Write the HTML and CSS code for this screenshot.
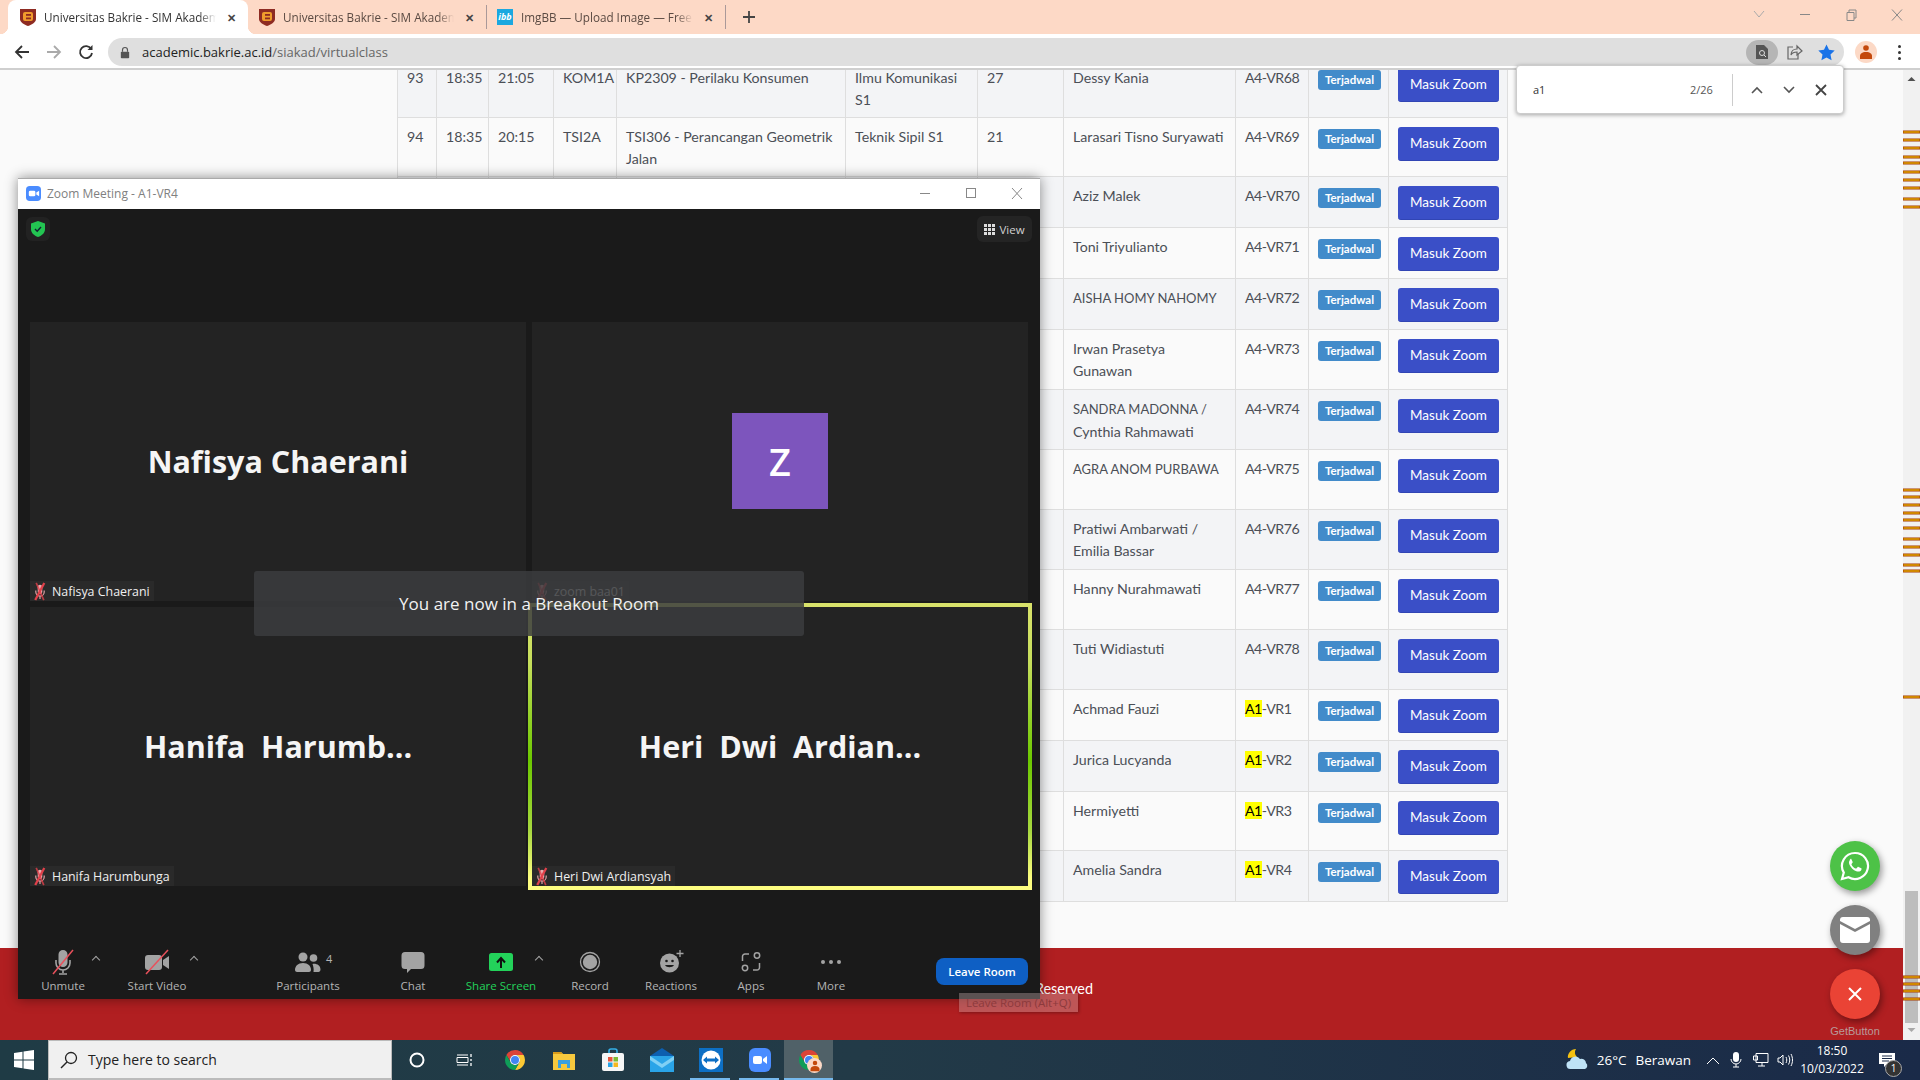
FILE: index.html
```html
<!DOCTYPE html>
<html lang="id">
<head>
  <meta charset="UTF-8">
  <title>Universitas Bakrie - SIM Akademik</title>
  <link rel="stylesheet" href="styles.css">
</head>
<body>
  <svg class="defs" width="0" height="0">
    <symbol id="muted" viewBox="0 0 14 20">
      <path d="M7 3a2.400 2.400 0 0 1 2.400 2.400v5a2.400 2.400 0 0 1-4.800 0v-5A2.400 2.400 0 0 1 7 3z" fill="#eaa9ad"/>
      <path d="M2.600 9v1.400a4.400 4.400 0 0 0 8.800 0V9M7 15v3" fill="none" stroke="#eaa9ad" stroke-width="1.200"/>
      <path d="M11.500 1 2 19" stroke="#e0404a" stroke-width="2.400"/>
      <path d="M3 1l8 18" stroke="#e0404a" stroke-width="1.800" opacity=".8"/>
    </symbol>
    <symbol id="chrome" viewBox="0 0 24 24">
      <path d="M12 2a10 10 0 0 1 8.660 5H12a5 5 0 0 0-4.900 6L3.340 7A10 10 0 0 1 12 2z" fill="#db4437"/>
      <path d="M20.660 7A10 10 0 0 1 12 22l4.330-7.500A5 5 0 0 0 12 7z" fill="#fcc934"/>
      <path d="M3.340 7 7.670 14.500A5 5 0 0 0 16.330 14.500L12 22A10 10 0 0 1 3.340 7z" fill="#0f9d58"/>
      <circle cx="12" cy="12" r="5" fill="#fff"/>
      <circle cx="12" cy="12" r="4" fill="#4285f4"/>
    </symbol>
    <symbol id="shield" viewBox="0 0 16 18">
      <path d="M0 1h16v10c0 3.500-4 5.500-8 7-4-1.500-8-3.500-8-7z" fill="#8e2b22"/>
      <rect x="3" y="4" width="10" height="9" rx="2" fill="#f09c2c"/>
      <rect x="6" y="6" width="5" height="1.800" fill="#8e2b22"/>
      <rect x="6" y="9.500" width="5" height="1.800" fill="#8e2b22"/>
    </symbol>
  </svg>

  <!-- browser chrome -->
  <div class="tab-strip">
    <div class="tab tab-active">
      <svg class="favicon" viewBox="0 0 16 18"><use href="#shield"/></svg>
      <span class="tab-title">Universitas Bakrie - SIM Akademik</span>
      <span class="tab-close">✕</span>
    </div>
    <div class="tab">
      <svg class="favicon" viewBox="0 0 16 18"><use href="#shield"/></svg>
      <span class="tab-title">Universitas Bakrie - SIM Akademik</span>
      <span class="tab-close">✕</span>
    </div>
    <div class="tab tab-divided">
      <span class="favicon favicon-ibb">ibb</span>
      <span class="tab-title">ImgBB — Upload Image — Free Image</span>
      <span class="tab-close">✕</span>
    </div>
    <div class="new-tab">
      <svg width="14" height="14" viewBox="0 0 14 14"><path d="M7 1v12M1 7h12" stroke="#444" stroke-width="1.800"/></svg>
    </div>
    <div class="win-controls">
      <svg viewBox="0 0 46 34"><path d="M18 11l5 6 5-6" fill="none" stroke="#aaa"/></svg>
      <svg viewBox="0 0 46 34"><path d="M18 14.500h10" stroke="#888"/></svg>
      <svg viewBox="0 0 46 34"><path d="M19 12.500h7v8h-7zM21 12.500v-2.500h7v8h-2" fill="none" stroke="#888"/></svg>
      <svg viewBox="0 0 46 34"><path d="M18 9.500l10 11M28 9.500l-10 11" stroke="#888"/></svg>
    </div>
  </div>

  <div class="address-row">
    <div class="nav-btn"><svg viewBox="0 0 16 16"><path d="M15 8H2M8 2 2 8l6 6" fill="none" stroke="#333" stroke-width="1.800"/></svg></div>
    <div class="nav-btn"><svg viewBox="0 0 16 16"><path d="M1 8h13M8 2l6 6-6 6" fill="none" stroke="#aaa" stroke-width="1.800"/></svg></div>
    <div class="nav-btn"><svg viewBox="0 0 16 16"><path d="M13.200 5A6 6 0 1 0 14 9" fill="none" stroke="#333" stroke-width="1.800"/><path d="M14.500 1v5h-5z" fill="#333"/></svg></div>
    <div class="url-pill">
      <svg class="lock" viewBox="0 0 12 14"><path d="M3 6V4a3 3 0 0 1 6 0v2" fill="none" stroke="#555" stroke-width="1.400"/><rect x="1" y="6" width="10" height="8" rx="1" fill="#555"/></svg>
      <span class="url"><b>academic.bakrie.ac.id</b>/siakad/virtualclass</span>
      <div class="pill-actions">
        <span class="pill-icon pill-icon-on"><svg width="12" height="16" viewBox="0 0 12 16"><path d="M0 1h8l4 4v10H0z" fill="#555"/><circle cx="6" cy="9" r="2.500" fill="none" stroke="#ddd"/><path d="M8 11l2 2" stroke="#ddd"/></svg></span>
        <span class="pill-icon"><svg width="18" height="18" viewBox="0 0 18 18"><path d="M8 4H3v12h10v-5" fill="none" stroke="#666" stroke-width="1.200"/><path d="M6 12c0-4 3-6 6-6V3l5 5-5 4V9c-3 0-5 1-6 3z" fill="none" stroke="#666" stroke-width="1.200"/></svg></span>
        <span class="pill-icon"><svg width="17" height="17" viewBox="0 0 17 17"><path d="M8.500 .5l2.500 5.300 5.700.7-4.200 4 1.100 5.800-5.100-2.800-5.100 2.800 1.100-5.800-4.200-4 5.700-.7z" fill="#1a73e8"/></svg></span>
      </div>
    </div>
    <div class="profile-actions">
      <span class="avatar"><svg width="12" height="16" viewBox="0 0 12 16"><circle cx="6" cy="4" r="2.800" fill="#c4490c"/><path d="M0 15v-3c0-2 2-4 6-4s6 2 6 4v3z" fill="#c4490c"/></svg></span>
      <span class="dots"><i></i><i></i><i></i></span>
    </div>
  </div>

  <!-- the web page, scrolled -->
  <div class="viewport">
    <div class="page">
      <div class="content">
        <table class="class-table">
          <colgroup>
            <col class="c-no"><col class="c-start"><col class="c-end"><col class="c-class"><col class="c-subject"><col class="c-prodi"><col class="c-count"><col class="c-name"><col class="c-room"><col class="c-status"><col class="c-action">
          </colgroup>
          <tr class="row-59"><td>93</td><td>18:35</td><td>21:05</td><td>KOM1A</td><td>KP2309 - Perilaku Konsumen</td><td>Ilmu Komunikasi S1</td><td>27</td><td class="nowrap">Dessy Kania</td><td class="room">A4-VR68</td><td><span class="badge">Terjadwal</span></td><td><a class="btn-zoom">Masuk Zoom</a></td></tr>
          <tr class="row-59"><td>94</td><td>18:35</td><td>20:15</td><td>TSI2A</td><td>TSI306 - Perancangan Geometrik Jalan</td><td>Teknik Sipil S1</td><td>21</td><td class="nowrap">Larasari Tisno Suryawati</td><td class="room">A4-VR69</td><td><span class="badge">Terjadwal</span></td><td><a class="btn-zoom">Masuk Zoom</a></td></tr>
          <tr class="row-51"><td></td><td></td><td></td><td></td><td></td><td></td><td></td><td class="nowrap">Aziz Malek</td><td class="room">A4-VR70</td><td><span class="badge">Terjadwal</span></td><td><a class="btn-zoom">Masuk Zoom</a></td></tr>
          <tr class="row-51"><td></td><td></td><td></td><td></td><td></td><td></td><td></td><td class="nowrap">Toni Triyulianto</td><td class="room">A4-VR71</td><td><span class="badge">Terjadwal</span></td><td><a class="btn-zoom">Masuk Zoom</a></td></tr>
          <tr class="row-51"><td></td><td></td><td></td><td></td><td></td><td></td><td></td><td class="nowrap"><span class="caps">AISHA HOMY NAHOMY</span></td><td class="room">A4-VR72</td><td><span class="badge">Terjadwal</span></td><td><a class="btn-zoom">Masuk Zoom</a></td></tr>
          <tr class="row-60"><td></td><td></td><td></td><td></td><td></td><td></td><td></td><td class="nowrap">Irwan Prasetya<br>Gunawan</td><td class="room">A4-VR73</td><td><span class="badge">Terjadwal</span></td><td><a class="btn-zoom">Masuk Zoom</a></td></tr>
          <tr class="row-60"><td></td><td></td><td></td><td></td><td></td><td></td><td></td><td class="nowrap"><span class="caps">SANDRA MADONNA /</span><br>Cynthia Rahmawati</td><td class="room">A4-VR74</td><td><span class="badge">Terjadwal</span></td><td><a class="btn-zoom">Masuk Zoom</a></td></tr>
          <tr class="row-60"><td></td><td></td><td></td><td></td><td></td><td></td><td></td><td class="nowrap"><span class="caps">AGRA ANOM PURBAWA</span></td><td class="room">A4-VR75</td><td><span class="badge">Terjadwal</span></td><td><a class="btn-zoom">Masuk Zoom</a></td></tr>
          <tr class="row-60"><td></td><td></td><td></td><td></td><td></td><td></td><td></td><td class="nowrap">Pratiwi Ambarwati /<br>Emilia Bassar</td><td class="room">A4-VR76</td><td><span class="badge">Terjadwal</span></td><td><a class="btn-zoom">Masuk Zoom</a></td></tr>
          <tr class="row-60"><td></td><td></td><td></td><td></td><td></td><td></td><td></td><td class="nowrap">Hanny Nurahmawati</td><td class="room">A4-VR77</td><td><span class="badge">Terjadwal</span></td><td><a class="btn-zoom">Masuk Zoom</a></td></tr>
          <tr class="row-60"><td></td><td></td><td></td><td></td><td></td><td></td><td></td><td class="nowrap">Tuti Widiastuti</td><td class="room">A4-VR78</td><td><span class="badge">Terjadwal</span></td><td><a class="btn-zoom">Masuk Zoom</a></td></tr>
          <tr class="row-51"><td></td><td></td><td></td><td></td><td></td><td></td><td></td><td class="nowrap">Achmad Fauzi</td><td class="room"><mark>A1</mark>-VR1</td><td><span class="badge">Terjadwal</span></td><td><a class="btn-zoom">Masuk Zoom</a></td></tr>
          <tr class="row-51"><td></td><td></td><td></td><td></td><td></td><td></td><td></td><td class="nowrap">Jurica Lucyanda</td><td class="room"><mark>A1</mark>-VR2</td><td><span class="badge">Terjadwal</span></td><td><a class="btn-zoom">Masuk Zoom</a></td></tr>
          <tr class="row-59"><td></td><td></td><td></td><td></td><td></td><td></td><td></td><td class="nowrap">Hermiyetti</td><td class="room"><mark>A1</mark>-VR3</td><td><span class="badge">Terjadwal</span></td><td><a class="btn-zoom">Masuk Zoom</a></td></tr>
          <tr class="row-51"><td></td><td></td><td></td><td></td><td></td><td></td><td></td><td class="nowrap">Amelia Sandra</td><td class="room"><mark>A1</mark>-VR4</td><td><span class="badge">Terjadwal</span></td><td><a class="btn-zoom">Masuk Zoom</a></td></tr>
        </table>
      </div>
      <div class="site-footer">All Rights Reserved</div>
    </div>

    <div class="scrollbar">
      <svg class="scroll-ticks" width="17" height="970" viewBox="0 0 17 970">
        <g fill="#ffd400" stroke="#a33a00" stroke-width="1">
          <rect x="0" y="61" width="17" height="2"/><rect x="0" y="69" width="17" height="2"/><rect x="0" y="77" width="17" height="2"/><rect x="0" y="86" width="17" height="2"/><rect x="0" y="92" width="17" height="2"/><rect x="0" y="101" width="17" height="2"/><rect x="0" y="109" width="17" height="2"/><rect x="0" y="117" width="17" height="2"/><rect x="0" y="128" width="17" height="2"/><rect x="0" y="136" width="17" height="2"/>
          <rect x="0" y="419" width="17" height="2"/><rect x="0" y="426" width="17" height="2"/><rect x="0" y="434" width="17" height="2"/><rect x="0" y="442" width="17" height="2"/><rect x="0" y="449" width="17" height="2"/><rect x="0" y="457" width="17" height="2"/><rect x="0" y="468" width="17" height="2"/><rect x="0" y="476" width="17" height="2"/><rect x="0" y="484" width="17" height="2"/><rect x="0" y="494" width="17" height="2"/><rect x="0" y="500" width="17" height="2"/>
          <rect x="0" y="626" width="17" height="2"/>
        </g>
        <path d="M8.500 7l4 4h-8z" fill="#505050"/>
        <rect x="2" y="821" width="13" height="132" fill="#bdbdbd"/>
        <g fill="#ffd400" stroke="#a33a00" stroke-width="1">
          <rect x="0" y="906" width="17" height="2"/><rect x="0" y="913" width="17" height="2"/><rect x="0" y="920" width="17" height="2"/><rect x="0" y="928" width="17" height="2"/>
        </g>
        <path d="M4.500 958h8l-4 4z" fill="#a8a8a8"/>
      </svg>
    </div>

    <!-- find bar -->
    <div class="find-bar">
      <span class="find-query">a1</span>
      <span class="find-count">2/26</span>
      <span class="find-sep"></span>
      <svg width="12" height="8" viewBox="0 0 12 8"><path d="M1 7l5-5 5 5" fill="none" stroke="#555" stroke-width="1.600"/></svg>
      <svg width="12" height="8" viewBox="0 0 12 8"><path d="M1 1l5 5 5-5" fill="none" stroke="#555" stroke-width="1.600"/></svg>
      <svg width="12" height="12" viewBox="0 0 12 12"><path d="M1 1l10 10M11 1 1 11" stroke="#444" stroke-width="1.800"/></svg>
    </div>

    <!-- getbutton widget -->
    <div class="fab fab-wa">
      <svg width="32" height="32" viewBox="0 0 32 32"><path d="M16 3a13 13 0 0 0-11.200 19.600L3 29l6.600-1.700A13 13 0 1 0 16 3z" fill="none" stroke="#fff" stroke-width="2.200"/><path d="M11.500 9.500c-1.500 1-2 3-1 5.200 1.400 3 3.800 5.300 6.800 6.500 2.300.9 4.200.2 5-1.300.4-.8.300-1.400 0-1.600l-2.800-1.400c-.4-.2-.7 0-1 .3l-.9 1.100c-.3.300-.6.300-1 .2-1.700-.7-3.200-2.100-4-3.800-.2-.4-.1-.7.1-.9l.8-1c.2-.3.3-.6.100-1l-1.200-2.600c-.2-.5-.7-.6-1.900.3z" fill="#fff"/></svg>
    </div>
    <div class="fab fab-mail">
      <svg width="30" height="26" viewBox="0 0 30 26"><path d="M3 0h24a3 3 0 0 1 3 3v1L15 12 0 4V3a3 3 0 0 1 3-3z" fill="#fff"/><path d="M0 7l15 8 15-8v16a3 3 0 0 1-3 3H3a3 3 0 0 1-3-3z" fill="#fff"/></svg>
    </div>
    <div class="fab fab-close">
      <svg width="16" height="16" viewBox="0 0 16 16"><path d="M2 2l12 12M14 2 2 14" stroke="#fff" stroke-width="2"/></svg>
    </div>
    <div class="fab-credit">GetButton</div>

    <!-- zoom window -->
    <div class="zoom-window">
      <div class="zoom-title">
        <svg class="zoom-logo" viewBox="0 0 16 16"><rect width="16" height="16" rx="4" fill="#4a8cff"/><rect x="3" y="5" width="7" height="6" rx="1.500" fill="#fff"/><path d="M11 7l3-2v6l-3-2z" fill="#fff"/></svg>
        <span>Zoom Meeting - A1-VR4</span>
        <div class="zoom-controls">
          <svg viewBox="0 0 46 31"><path d="M18 15.500h10" stroke="#888"/></svg>
          <svg viewBox="0 0 46 31"><rect x="18.500" y="10.500" width="9" height="9" fill="none" stroke="#888"/></svg>
          <svg viewBox="0 0 46 31"><path d="M18 10l10 11M28 10 18 21" stroke="#888"/></svg>
        </div>
      </div>
      <div class="zoom-body">
        <div class="zoom-top">
          <span class="security"><svg width="14" height="16" viewBox="0 0 14 16"><path d="M7 0l7 2.500V8c0 4-3 6.500-7 8-4-1.500-7-4-7-8V2.500z" fill="#23c552"/><path d="M4 8l2.200 2.200L10 6" fill="none" stroke="#123" stroke-width="1.400"/></svg></span>
          <span class="view-btn"><svg width="11" height="11" viewBox="0 0 11 11" fill="#ddd"><rect width="3" height="3"/><rect x="4" width="3" height="3"/><rect x="8" width="3" height="3"/><rect y="4" width="3" height="3"/><rect x="4" y="4" width="3" height="3"/><rect x="8" y="4" width="3" height="3"/><rect y="8" width="3" height="3"/><rect x="4" y="8" width="3" height="3"/><rect x="8" y="8" width="3" height="3"/></svg>View</span>
        </div>
        <div class="tile-grid">
          <div class="tile">
            <div class="tile-name">Nafisya Chaerani</div>
            <div class="tile-label"><svg viewBox="0 0 14 20"><use href="#muted"/></svg>Nafisya Chaerani</div>
          </div>
          <div class="tile">
            <div class="tile-avatar">Z</div>
            <div class="tile-label"><svg viewBox="0 0 14 20"><use href="#muted"/></svg>zoom baa01</div>
          </div>
          <div class="tile">
            <div class="tile-name">Hanifa&nbsp; Harumb...</div>
            <div class="tile-label"><svg viewBox="0 0 14 20"><use href="#muted"/></svg>Hanifa Harumbunga</div>
          </div>
          <div class="tile tile-speaking">
            <div class="tile-name">Heri&nbsp; Dwi&nbsp; Ardian...</div>
            <div class="tile-label"><svg viewBox="0 0 14 20"><use href="#muted"/></svg>Heri Dwi Ardiansyah</div>
          </div>
        </div>
        <div class="zoom-toolbar">
          <div class="tool tool-mic">
            <svg viewBox="0 0 28 26"><path d="M14 1a4.500 4.500 0 0 1 4.500 4.500v8a4.500 4.500 0 0 1-9 0v-8A4.500 4.500 0 0 1 14 1z" fill="#a3a3a3"/><path d="M7 11v3a7 7 0 0 0 14 0v-3M14 21v3M10 25h8" fill="none" stroke="#a3a3a3" stroke-width="1.600"/><path d="M24 1 4 25" stroke="#e8505b" stroke-width="1.500"/></svg>
            <span>Unmute</span><em class="caret"></em>
          </div>
          <div class="tool tool-video">
            <svg viewBox="0 0 28 26"><rect x="2" y="6" width="17" height="15" rx="3" fill="#a3a3a3"/><path d="M20 11l6-4v13l-6-4z" fill="#a3a3a3"/><path d="M25 1 3 25" stroke="#e8505b" stroke-width="1.500"/></svg>
            <span>Start Video</span><em class="caret"></em>
          </div>
          <div class="tool tool-people">
            <svg viewBox="0 0 28 26"><circle cx="9" cy="8" r="4.500" fill="#a3a3a3"/><circle cx="19.500" cy="9" r="3.800" fill="#a3a3a3"/><path d="M1 21c0-4 3-7 8-7s8 3 8 7c0 1-1 2-2 2H3c-1 0-2-1-2-2z" fill="#a3a3a3"/><path d="M18.500 15c4-.7 8 1.500 8 5.500 0 1.500-1 2.500-2 2.500h-5c.5-3-.2-5.800-1-8z" fill="#a3a3a3"/></svg>
            <b class="people-count">4</b>
            <span>Participants</span>
          </div>
          <div class="tool tool-chat">
            <svg viewBox="0 0 28 26"><path d="M6 3h16a3.500 3.500 0 0 1 3.500 3.500v10A3.500 3.500 0 0 1 22 20H12l-4 4v-4H6a3.500 3.500 0 0 1-3.500-3.500v-10A3.500 3.500 0 0 1 6 3z" fill="#a3a3a3"/></svg>
            <span>Chat</span>
          </div>
          <div class="tool tool-share">
            <svg viewBox="0 0 28 26"><rect x="2" y="4" width="24" height="18" rx="2.500" fill="#23d25a"/><path d="M14 19v-9M10 13.500 14 9l4 4.500" fill="none" stroke="#101010" stroke-width="2"/></svg>
            <span>Share Screen</span><em class="caret"></em>
          </div>
          <div class="tool tool-tight">
            <svg viewBox="0 0 28 26"><circle cx="14" cy="13" r="9.500" fill="none" stroke="#a3a3a3" stroke-width="1.300"/><circle cx="14" cy="13" r="7.200" fill="#a3a3a3"/></svg>
            <span>Record</span>
          </div>
          <div class="tool tool-flush">
            <svg viewBox="0 0 28 26"><circle cx="12.500" cy="14" r="9.500" fill="#a3a3a3"/><circle cx="9.500" cy="12" r="1.300" fill="#1a1a1a"/><circle cx="15.500" cy="12" r="1.300" fill="#1a1a1a"/><path d="M8 16c1.500 3 7.500 3 9 0z" fill="#1a1a1a"/><path d="M23 1v7M19.500 4.500h7" stroke="#a3a3a3" stroke-width="1.300"/></svg>
            <span>Reactions</span>
          </div>
          <div class="tool">
            <svg viewBox="0 0 28 26"><path d="M12 5H8a2.500 2.500 0 0 0-2.500 2.500V12M16 21h4a2.500 2.500 0 0 0 2.500-2.500V14" fill="none" stroke="#a3a3a3" stroke-width="1.500"/><circle cx="20" cy="6.500" r="2.700" fill="none" stroke="#a3a3a3" stroke-width="1.500"/><circle cx="8" cy="19" r="2.700" fill="none" stroke="#a3a3a3" stroke-width="1.500"/></svg>
            <span>Apps</span>
          </div>
          <div class="tool">
            <svg viewBox="0 0 28 26" fill="#a3a3a3"><circle cx="6" cy="13" r="2"/><circle cx="14" cy="13" r="2"/><circle cx="22" cy="13" r="2"/></svg>
            <span>More</span>
          </div>
          <button class="leave-btn">Leave Room</button>
        </div>
        <div class="breakout-toast">You are now in a Breakout Room</div>
      </div>
    </div>
    <div class="leave-tip">Leave Room (Alt+Q)</div>
  </div>

  <!-- windows taskbar -->
  <div class="taskbar">
    <div class="start"><svg width="20" height="20" viewBox="0 0 20 20" fill="#fff"><path d="M0 3l8.500-1.200v7.700H0zM9.500 1.600 20 0v9.500H9.500zM0 10.500h8.500v7.700L0 17zM9.500 10.500H20V20L9.500 18.400z"/></svg></div>
    <div class="search-box">
      <svg width="18" height="18" viewBox="0 0 18 18"><circle cx="11" cy="7" r="5.500" fill="none" stroke="#222" stroke-width="1.300"/><path d="M7 11l-6 6" stroke="#222" stroke-width="1.500"/></svg>
      <span>Type here to search</span>
    </div>
    <div class="task-icon"><svg width="16" height="16" viewBox="0 0 16 16"><circle cx="8" cy="8" r="6.500" fill="none" stroke="#fff" stroke-width="2"/></svg></div>
    <div class="task-icon task-view"><svg width="16" height="16" viewBox="0 0 16 16"><path d="M1 3h11M1 13h11M1 5.500h11v5H1z" fill="none" stroke="#fff"/><path d="M15 2v3M15 7v2M15 11v3" stroke="#fff" stroke-width="1.300"/></svg></div>
    <div class="task-icon"><svg width="24" height="24"><use href="#chrome"/></svg></div>
    <div class="task-icon"><svg width="22" height="20" viewBox="0 0 22 20"><path d="M0 2h8l2 2h12v16H0z" fill="#f7c93e"/><path d="M0 2h8l2 2H0z" fill="#d99b1a"/><path d="M5 10h12v8h-3v-4H8v4H5z" fill="#3aa0e0"/></svg></div>
    <div class="task-icon"><svg width="22" height="24" viewBox="0 0 22 24"><path d="M7 6V3a2 2 0 0 1 2-2h4a2 2 0 0 1 2 2v3" fill="none" stroke="#35b0e8" stroke-width="1.600"/><rect y="5" width="22" height="18" rx="2" fill="#f6f6f6"/><rect x="6" y="9" width="4.500" height="4.500" fill="#e8543a"/><rect x="11.500" y="9" width="4.500" height="4.500" fill="#7dbb34"/><rect x="6" y="14.500" width="4.500" height="4.500" fill="#2aa4e8"/><rect x="11.500" y="14.500" width="4.500" height="4.500" fill="#f6b820"/></svg></div>
    <div class="task-icon"><svg width="24" height="24" viewBox="0 0 24 24"><path d="M12 0 24 8v3H0V8z" fill="#0d5fb0"/><path d="M0 8h24v16H0z" fill="#2aa4e8"/><path d="M0 8l12 8 12-8v4L12 20 0 12z" fill="#7fd0f5"/></svg></div>
    <div class="task-icon task-open"><svg width="24" height="24" viewBox="0 0 24 24"><rect width="24" height="24" fill="#0d6fc4"/><circle cx="12" cy="12" r="9.500" fill="#fff"/><path d="M4 12l4-3.500v2h8v-2l4 3.500-4 3.500v-2H8v2z" fill="#0d6fc4"/></svg></div>
    <div class="task-icon task-open"><svg width="22" height="24" viewBox="0 0 22 24"><rect width="22" height="24" rx="6" fill="#4a8cff"/><rect x="4" y="8" width="9" height="8" rx="2" fill="#fff"/><path d="M14 11l4-3v8l-4-3z" fill="#fff"/></svg></div>
    <div class="task-icon task-active">
      <svg width="24" height="24"><use href="#chrome"/></svg>
      <span class="task-badge"><svg width="10" height="12" viewBox="0 0 12 16"><circle cx="6" cy="4" r="3" fill="#c4490c"/><path d="M0 15v-3c0-2 2-4 6-4s6 2 6 4v3z" fill="#c4490c"/></svg></span>
    </div>
    <div class="tray">
      <svg class="weather" width="24" height="22" viewBox="0 0 24 22"><path d="M11 0a6 6 0 0 0 1 8L3 9C2 5 6 0 11 0z" fill="#f5c211"/><path d="M6 20a4 4 0 0 1-1-8 5.500 5.500 0 0 1 10-2 4.500 4.500 0 0 1 6 4 3.500 3.500 0 0 1-1 6z" fill="#bfe3f7"/></svg>
      <span class="tray-temp">26°C</span>
      <span class="tray-cond">Berawan</span>
      <svg class="tray-up" width="12" height="7" viewBox="0 0 12 7"><path d="M0 7l6-6 6 6" fill="none" stroke="#fff"/></svg>
      <svg class="tray-mic" width="12" height="16" viewBox="0 0 12 16"><rect x="3" y="0" width="6" height="10" rx="3" fill="#fff"/><path d="M1 7a5 5 0 0 0 10 0M6 12v3M3 15h6" fill="none" stroke="#fff"/></svg>
      <svg class="tray-net" width="16" height="14" viewBox="0 0 16 14"><path d="M3 .5h12v9H3zM.5 3h4v4h-4zM5 13h7M9 10v3" fill="none" stroke="#fff"/></svg>
      <svg class="tray-vol" width="16" height="14" viewBox="0 0 16 14"><path d="M1 5h2l3-3v10L3 9H1zM9 4c1 2 1 4 0 6M11.500 2.500c1.700 3 1.700 6 0 9M14 1c2 4 2 8 0 12" fill="none" stroke="#fff"/></svg>
      <div class="clock"><span>18:50</span><span>10/03/2022</span></div>
      <div class="notif">
        <svg width="16" height="15" viewBox="0 0 16 15"><path d="M0 0h16v11H8l-3 3v-3H0z" fill="#fff"/><path d="M3 3h10M3 5.500h10M3 8h7" stroke="#1a2a48"/></svg>
        <span class="notif-count">1</span>
      </div>
    </div>
  </div>
</body>
</html>
```

FILE: styles.css
```css
html, body {
  margin: 0;
  padding: 0;
  height: 100%;
  overflow: hidden;
}
body {
  width: 1920px;
  height: 1080px;
  display: flex;
  flex-direction: column;
  font-family: "Open Sans", "Noto Sans", sans-serif;
}
.defs {
  position: absolute;
}

/* browser */
.tab-strip {
  height: 34px;
  background-color: #fdd9c6;
  display: flex;
  padding-left: 8px;
  flex-shrink: 0;
}
.tab {
  width: 238px;
  height: 34px;
  display: flex;
  align-items: center;
  box-sizing: border-box;
  padding: 0 8px 0 11px;
  font-size: 11.7px;
  color: #5a4a42;
}
.tab-active {
  position: relative;
  width: 240px;
  padding-left: 12px;
  background-color: #fff;
  border-radius: 8px 8px 0 0;
  color: #333;
}
.tab-active::before,
.tab-active::after {
  content: "";
  position: absolute;
  bottom: 0;
  width: 8px;
  height: 8px;
}
.tab-active::before {
  left: -8px;
  background: radial-gradient(circle at 0 0, #fdd9c6 8px, #fff 8.5px);
}
.tab-active::after {
  right: -8px;
  background: radial-gradient(circle at 100% 0, #fdd9c6 8px, #fff 8.5px);
}
.tab-divided {
  width: 240px;
  border-left: 1px solid #a99;
  border-right: 1px solid #a99;
  height: 24px;
  margin-top: 5px;
  padding-left: 10px;
}
.favicon {
  width: 16px;
  height: 18px;
  flex-shrink: 0;
  margin-right: 8px;
}
.favicon-ibb {
  height: 16px;
  background-color: #1ba8e0;
  color: #fff;
  font-size: 9px;
  font-style: italic;
  font-weight: bold;
  line-height: 16px;
  text-align: center;
}
.tab-title {
  flex: 1;
  white-space: nowrap;
  overflow: hidden;
  -webkit-mask-image: linear-gradient(to right, #000 90%, transparent);
  mask-image: linear-gradient(to right, #000 90%, transparent);
}
.tab-close {
  width: 18px;
  margin-left: 6px;
  font-size: 11px;
  font-weight: bold;
  color: #444;
  text-align: center;
}
.new-tab {
  width: 46px;
  display: flex;
  align-items: center;
  justify-content: center;
}
.win-controls {
  margin-left: auto;
  display: flex;
}
.win-controls svg {
  width: 46px;
  height: 34px;
}
.address-row {
  position: relative;
  z-index: 1;
  height: 36px;
  box-sizing: border-box;
  background-color: #fff;
  border-bottom: 2px solid #cfcfcf;
  display: flex;
  align-items: flex-start;
  padding: 4px 0 0 6px;
  flex-shrink: 0;
}
.nav-btn {
  width: 32px;
  height: 28px;
  display: flex;
  align-items: center;
  justify-content: center;
}
.nav-btn svg {
  width: 16px;
  height: 16px;
}
.url-pill {
  width: 1736px;
  margin-left: 6px;
  height: 28px;
  border-radius: 14px;
  background-color: #dfdfdf;
  display: flex;
  align-items: center;
  box-sizing: border-box;
  padding: 0 2px 0 12px;
}
.lock {
  width: 10px;
  height: 13px;
  margin-right: 12px;
}
.url {
  font-size: 13px;
  color: #666;
}
.url b {
  font-weight: normal;
  color: #222;
}
.pill-actions {
  margin-left: auto;
  display: flex;
}
.pill-icon {
  width: 32px;
  height: 25px;
  display: flex;
  align-items: center;
  justify-content: center;
}
.pill-icon-on {
  background-color: #b5b5b5;
  border-radius: 13px;
}
.profile-actions {
  flex: 1;
  display: flex;
  align-items: center;
  height: 28px;
  padding-left: 11px;
}
.avatar {
  width: 22px;
  height: 22px;
  border-radius: 50%;
  background-color: #fcd9c6;
  display: flex;
  align-items: center;
  justify-content: center;
}
.dots {
  margin-left: 21px;
  display: flex;
  flex-direction: column;
  gap: 3px;
}
.dots i {
  width: 3px;
  height: 3px;
  border-radius: 50%;
  background-color: #333;
}

/* page */
.viewport {
  position: relative;
  flex: 1;
  display: flex;
  background-color: #fafafa;
}
.page {
  flex: 1;
  display: flex;
  flex-direction: column;
  min-width: 0;
}
.content {
  flex: 1;
  padding-left: 397px;
  overflow: hidden;
}
.class-table {
  margin-top: -12px;
  border-collapse: collapse;
  table-layout: fixed;
  width: 1110px;
  font-family: "Lato", "Open Sans", sans-serif;
  font-size: 14.2px;
  line-height: 21.6px;
  color: #4b4f56;
}
.c-no { width: 39px; }
.c-start { width: 52px; }
.c-end { width: 65px; }
.c-class { width: 63px; }
.c-subject { width: 229px; }
.c-prodi { width: 132px; }
.c-count { width: 86px; }
.c-name { width: 172px; }
.c-room { width: 73px; }
.c-status { width: 80px; }
.c-action { width: 119px; }
.class-table td {
  border: 1px solid #dedede;
  padding: 8px 9px 6px;
  vertical-align: top;
}
.class-table .nowrap {
  white-space: nowrap;
}
.class-table .room {
  white-space: nowrap;
  letter-spacing: -0.5px;
}
.caps {
  font-size: 13px;
}
.class-table tr:nth-child(odd) {
  background-color: #f3f4f6;
}
.row-51 { height: 51px; }
.row-59 { height: 59px; }
.row-60 { height: 60px; }
.class-table mark {
  background-color: #ff0;
  color: #000;
}
.badge {
  display: inline-block;
  width: 63px;
  height: 20px;
  margin-top: 3px;
  border-radius: 3px;
  background-color: #428bca;
  color: #fff;
  font-size: 11.5px;
  font-weight: bold;
  line-height: 19px;
  text-align: center;
  vertical-align: top;
}
.btn-zoom {
  display: block;
  width: 101px;
  height: 34px;
  margin-top: 1px;
  box-sizing: border-box;
  border-radius: 3px;
  background-color: #3a4fc7;
  border-bottom: 1px solid #3145b4;
  color: #fff;
  font-size: 13.5px;
  line-height: 33px;
  text-align: center;
}
.site-footer {
  height: 92px;
  background-color: #b11f21;
  color: #fff;
  font-size: 14.4px;
  font-family: "Lato", "Open Sans", sans-serif;
  display: flex;
  justify-content: flex-end;
  padding: 32px 810px 0 0;
  box-sizing: border-box;
}
.scrollbar {
  width: 17px;
  background-color: #f1f1f1;
}
.scroll-ticks {
  display: block;
}
.find-bar {
  position: absolute;
  z-index: 2;
  left: 1516px;
  top: -5px;
  width: 328px;
  height: 49px;
  box-sizing: border-box;
  background-color: #fff;
  border-radius: 4px;
  border: 1px solid #ccc;
  box-shadow: 0 1px 4px rgba(0, 0, 0, 0.35);
  display: flex;
  align-items: center;
  padding-left: 16px;
  font-size: 11px;
  color: #555;
}
.find-query {
  color: #333;
  width: 157px;
}
.find-count {
  width: 24px;
}
.find-sep {
  width: 1px;
  height: 32px;
  background-color: #ccc;
  margin: 0 18px;
}
.find-bar svg + svg {
  margin-left: 20px;
}
.fab {
  position: absolute;
  left: 1830px;
  width: 50px;
  height: 50px;
  border-radius: 50%;
  display: flex;
  align-items: center;
  justify-content: center;
  box-shadow: 2px 3px 7px rgba(0, 0, 0, 0.4);
}
.fab-wa {
  top: 771px;
  background-color: #4dc247;
}
.fab-mail {
  top: 835px;
  background-color: #808080;
}
.fab-close {
  top: 899px;
  background-color: #ea4335;
}
.fab-credit {
  position: absolute;
  left: 1825px;
  top: 955px;
  width: 60px;
  font-family: "Liberation Sans", sans-serif;
  font-size: 11px;
  text-align: center;
  color: #b89a9a;
}

/* zoom */
.zoom-window {
  position: absolute;
  left: 18px;
  top: 108px;
  width: 1022px;
  height: 821px;
  box-shadow: 0 0 12px rgba(0, 0, 0, 0.45);
  display: flex;
  flex-direction: column;
}
.zoom-title {
  height: 31px;
  flex-shrink: 0;
  background-color: #fff;
  box-shadow: inset 0 1px 0 #aaa;
  display: flex;
  align-items: center;
  padding-left: 8px;
  box-sizing: border-box;
  font-size: 12px;
  color: #808080;
}
.zoom-logo {
  width: 15px;
  height: 15px;
  margin-right: 6px;
}
.zoom-controls {
  margin-left: auto;
  display: flex;
}
.zoom-controls svg {
  width: 46px;
  height: 31px;
}
.zoom-body {
  position: relative;
  flex: 1;
  background-color: #1a1a1a;
  display: flex;
  flex-direction: column;
}
.zoom-top {
  height: 113px;
  box-sizing: border-box;
  padding: 7px 8px 0 8px;
  display: flex;
  justify-content: space-between;
  align-items: flex-start;
}
.security {
  width: 24px;
  height: 24px;
  display: flex;
  align-items: center;
  justify-content: center;
  border-radius: 6px;
  background-color: #222;
  margin-top: 1px;
}
.view-btn {
  width: 55px;
  height: 26px;
  border-radius: 6px;
  background-color: #242424;
  color: #d0d0d0;
  font-size: 11.5px;
  display: flex;
  align-items: center;
  justify-content: center;
  gap: 4px;
}
.tile-grid {
  display: grid;
  grid-template-columns: 496px 496px;
  grid-template-rows: 279px 279px;
  gap: 6px;
  padding-left: 12px;
}
.tile {
  position: relative;
  box-sizing: border-box;
  padding-bottom: 2px;
  background-color: #232323;
  display: flex;
  align-items: center;
  justify-content: center;
}
.tile-speaking::after {
  content: "";
  position: absolute;
  inset: -4px;
  border: 4px solid;
  border-image: linear-gradient(to bottom, #d8e26a 0%, #c6de5c 20%, #6cc800 55%, #a8d840 80%, #fdfd80 97%) 1;
}
.tile-name {
  font-size: 30.5px;
  font-weight: 700;
  color: #f5f5f5;
  white-space: nowrap;
}
.tile-avatar {
  width: 96px;
  height: 96px;
  background-color: #7d55bd;
  color: #fff;
  font-size: 38px;
  font-weight: 600;
  line-height: 96px;
  text-align: center;
}
.tile-label {
  position: absolute;
  left: 0;
  bottom: 0;
  height: 20px;
  display: flex;
  align-items: center;
  padding: 0 4px 0 3px;
  background-color: #2a2a2a;
  color: #f0f0f0;
  font-size: 12.4px;
  z-index: 1;
}
.tile-label svg {
  width: 14px;
  height: 19px;
  margin-right: 5px;
}
.breakout-toast {
  position: absolute;
  left: 236px;
  top: 362px;
  width: 550px;
  height: 65px;
  border-radius: 3px;
  background-color: rgba(59, 60, 62, 0.85);
  color: #f2f2f2;
  font-size: 17px;
  line-height: 66px;
  text-align: center;
  z-index: 2;
}
.zoom-toolbar {
  margin-top: auto;
  height: 50px;
  display: flex;
  align-items: flex-start;
  padding-left: 5px;
}
.tool {
  position: relative;
  width: 80px;
  display: flex;
  flex-direction: column;
  align-items: center;
  color: #b4b4b4;
  font-size: 11.5px;
  line-height: 16px;
}
.tool svg {
  width: 28px;
  height: 26px;
  margin-bottom: 3px;
}
.tool-video { margin-left: 14px; }
.tool-people { margin-left: 71px; }
.tool-chat { margin-left: 25px; }
.tool-share { margin-left: 8px; color: #23d25a; }
.tool-tight { margin-left: 9px; }
.tool-flush { margin-left: 1px; }
.caret {
  position: absolute;
  right: 0;
  top: 8px;
  width: 5px;
  height: 5px;
  border-left: 1.5px solid #a3a3a3;
  border-top: 1.5px solid #a3a3a3;
  transform: rotate(45deg);
}
.tool-mic .caret { right: 4px; }
.tool-share .caret { right: -1px; }
.people-count {
  position: absolute;
  left: 58px;
  top: 2px;
  font-weight: normal;
  font-size: 11px;
}
.leave-btn {
  margin: 9px 0 0 65px;
  width: 92px;
  height: 27px;
  border: none;
  border-radius: 8px;
  background-color: #0e5fc4;
  color: #fff;
  font-family: inherit;
  font-size: 11.5px;
  font-weight: 600;
  padding: 0;
}
.leave-tip {
  position: absolute;
  left: 959px;
  top: 923px;
  width: 119px;
  height: 19px;
  background-color: rgba(215, 190, 190, 0.35);
  box-shadow: 1px 1px 3px rgba(0, 0, 0, 0.3);
  color: #8c3a3c;
  font-size: 11.5px;
  line-height: 19px;
  text-align: center;
}

/* taskbar */
.taskbar {
  height: 40px;
  flex-shrink: 0;
  background: linear-gradient(to right, #1f3b45, #223a47 45%, #1a2a48);
  display: flex;
  color: #fff;
}
.start {
  width: 48px;
  display: flex;
  align-items: center;
  justify-content: center;
}
.search-box {
  width: 344px;
  box-sizing: border-box;
  background-color: #f0f0f0;
  border: 1px solid #bbb;
  border-bottom-width: 2px;
  display: flex;
  align-items: center;
  padding-left: 11px;
  gap: 10px;
  color: #222;
  font-size: 14px;
}
.task-icon {
  position: relative;
  width: 49px;
  display: flex;
  align-items: center;
  justify-content: center;
}
.task-view svg {
  margin-right: 3px;
}
.task-open::after {
  content: "";
  position: absolute;
  left: 4px;
  right: 5px;
  bottom: 0;
  height: 2px;
  background-color: #76b9ed;
}
.task-active {
  background-color: #506168;
}
.task-active::after {
  content: "";
  position: absolute;
  left: 0;
  right: 0;
  bottom: 0;
  height: 2px;
  background-color: #76b9ed;
}
.task-badge {
  position: absolute;
  left: 23px;
  top: 18px;
  width: 15px;
  height: 15px;
  border-radius: 50%;
  background-color: #fcd9c6;
  display: flex;
  align-items: center;
  justify-content: center;
}
.tray {
  margin-left: auto;
  display: flex;
  align-items: center;
  font-size: 13.5px;
}
.tray-temp { margin-left: 8px; }
.tray-cond { margin-left: 9px; }
.tray-up { margin-left: 16px; }
.tray-mic { margin-left: 11px; }
.tray-net { margin-left: 11px; }
.tray-vol { margin-left: 8px; }
.clock {
  width: 70px;
  margin-left: 4px;
  display: flex;
  flex-direction: column;
  align-items: center;
  font-size: 12px;
  line-height: 18px;
}
.notif {
  position: relative;
  width: 40px;
  margin-left: 13px;
  height: 15px;
}
.notif svg {
  display: block;
  margin-left: -1px;
}
.notif-count {
  position: absolute;
  left: 5px;
  top: 7px;
  width: 15px;
  height: 15px;
  border-radius: 50%;
  border: 1px solid #aaa;
  background-color: #333;
  font-size: 10px;
  line-height: 15px;
  text-align: center;
}
```
